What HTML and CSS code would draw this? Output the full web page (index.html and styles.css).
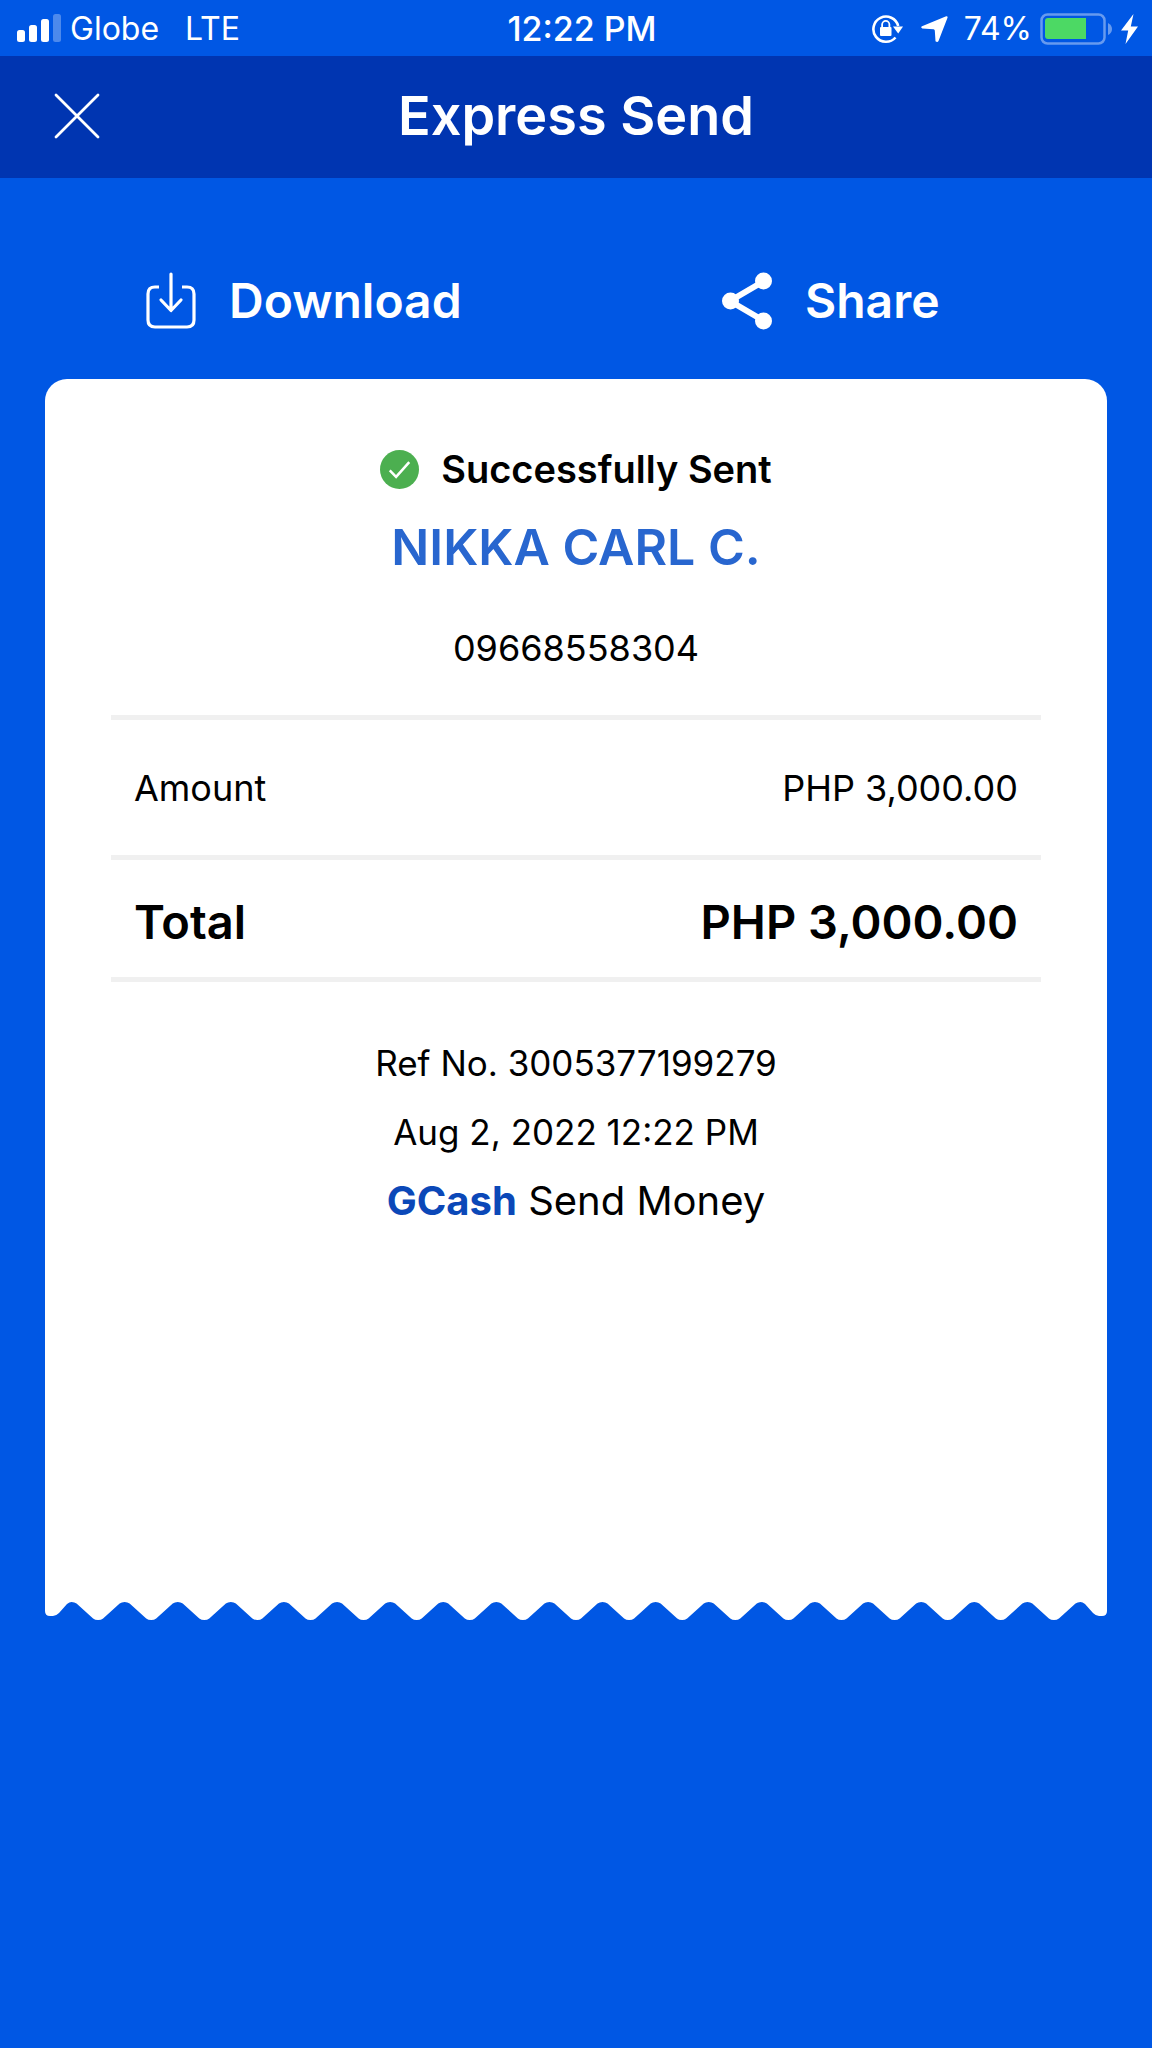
FILE: index.html
```html
<!DOCTYPE html>
<html lang="en">
<head>
<meta charset="utf-8">
<meta name="viewport" content="width=device-width, initial-scale=1">
<title>Express Send</title>
<link rel="stylesheet" href="styles.css">
</head>
<body>
<div class="status">
  <div class="status-side">
    <svg class="signal" width="46" height="30" viewBox="0 0 46 30" fill="#fff" aria-hidden="true">
      <rect x="1" y="16" width="8" height="12" rx="2.5"/>
      <rect x="13" y="11" width="8" height="17" rx="2.5"/>
      <rect x="25" y="5" width="8" height="23" rx="2.5"/>
      <rect x="37" y="0" width="8" height="28" rx="2.5" opacity=".3"/>
    </svg>
    <span class="carrier">Globe</span>
    <span>LTE</span>
  </div>
  <div class="clock">12:22 PM</div>
  <div class="status-side status-right">
    <svg width="32" height="30" viewBox="0 0 32 30" aria-hidden="true">
      <path d="M24.500 23.500A12.600 12.600 0 1 1 27.200 12" fill="none" stroke="#fff" stroke-width="2.600"/>
      <path d="M22 12.500H32L27.200 19.500Z" fill="#fff"/>
      <rect x="9" y="13" width="11.500" height="9" rx="1" fill="#fff"/>
      <path d="M11.100 13.500V10.600a3.650 3.650 0 0 1 7.300 0V13.500" fill="none" stroke="#fff" stroke-width="1.800"/>
    </svg>
    <svg class="location" width="27" height="27" viewBox="0 0 27 27" aria-hidden="true">
      <path d="M25.200.200Q27 0 26.500 1.800L17.500 25Q16.500 27 14.500 25.300L13.800 14.500Q13.600 13.500 12.600 13.300L1.300 12.500Q-.800 11.500 1 10.200Z" fill="#fff"/>
    </svg>
    <span class="percent">74%</span>
    <svg class="battery" width="73" height="32" viewBox="0 0 73 32" aria-hidden="true">
      <rect x="1.500" y="1.500" width="63" height="29" rx="6" fill="none" stroke="#fff" stroke-opacity=".4" stroke-width="2.500"/>
      <path d="M8 5H46V26H8Q5 26 5 23V8Q5 5 8 5Z" fill="#4cd964"/>
      <path d="M68 10Q72 12 72 16Q72 20 68 22Z" fill="#fff" opacity=".4"/>
    </svg>
    <svg class="bolt" width="17" height="30" viewBox="0 0 17 30" aria-hidden="true">
      <path d="M12.500 0L0 16.500H7.200L4.500 30L17 12.500H9.800Z" fill="#fff"/>
    </svg>
  </div>
</div>
<header class="header">
  <button class="close" type="button" aria-label="Close">
    <svg width="46" height="46" viewBox="0 0 46 46" aria-hidden="true">
      <path d="M2 2L44 44M44 2L2 44" stroke="#fff" stroke-width="2.800" stroke-linecap="round"/>
    </svg>
  </button>
  <h1 class="title">Express Send</h1>
</header>
<main>
  <div class="actions">
    <button class="action" type="button">
      <svg width="50" height="58" viewBox="0 0 50 58" fill="none" stroke="#fff" stroke-width="3.200" stroke-linecap="round" stroke-linejoin="round" aria-hidden="true">
        <path d="M13 15H9Q2 15 2 22V48Q2 55 9 55H41Q48 55 48 48V22Q48 15 41 15H36" stroke-linecap="butt"/>
        <path d="M25 2V38M15 28L25 38.500L35 28"/>
      </svg>
      Download
    </button>
    <button class="action" type="button">
      <svg width="50" height="58" viewBox="0 0 50 58" fill="#fff" aria-hidden="true">
        <path d="M42 9L8 29L42 49" fill="none" stroke="#fff" stroke-width="6"/>
        <circle cx="41.500" cy="9" r="8.500"/>
        <circle cx="8.500" cy="29" r="8.500"/>
        <circle cx="41.500" cy="49" r="8.500"/>
      </svg>
      Share
    </button>
  </div>
  <section class="receipt">
    <div class="card">
      <p class="success">
        <svg width="39" height="39" viewBox="0 0 40 40" aria-hidden="true">
          <circle cx="20" cy="20" r="20" fill="#4caf50"/>
          <path d="M10 21L16.500 27.500L30 12.500" fill="none" stroke="#fff" stroke-width="2.600"/>
        </svg>
        Successfully Sent
      </p>
      <h2 class="name">NIKKA CARL C.</h2>
      <p class="phone">09668558304</p>
      <table class="amounts">
        <tbody>
          <tr><th scope="row">Amount</th><td>PHP 3,000.00</td></tr>
          <tr class="total"><th scope="row">Total</th><td>PHP 3,000.00</td></tr>
        </tbody>
      </table>
      <div class="details">
        <p>Ref No. 3005377199279</p>
        <p>Aug 2, 2022 12:22 PM</p>
        <p class="brand"><b>GCash</b> Send Money</p>
      </div>
    </div>
    <svg class="tear" viewBox="0 0 1062 21" aria-hidden="true">
      <path fill="#fff" d="M0 0V11Q0 16 5 16H8Q11 16 14 13L22 4Q24.500 2 26.550 2
      q3 0 5 1.600l16.550 14.800q2 1.600 5 1.600q3 0 5-1.600l16.550-14.800q2-1.600 5-1.600
      q3 0 5 1.600l16.550 14.800q2 1.600 5 1.600q3 0 5-1.600l16.550-14.800q2-1.600 5-1.600
      q3 0 5 1.600l16.550 14.800q2 1.600 5 1.600q3 0 5-1.600l16.550-14.800q2-1.600 5-1.600
      q3 0 5 1.600l16.550 14.800q2 1.600 5 1.600q3 0 5-1.600l16.550-14.800q2-1.600 5-1.600
      q3 0 5 1.600l16.550 14.800q2 1.600 5 1.600q3 0 5-1.600l16.550-14.800q2-1.600 5-1.600
      q3 0 5 1.600l16.550 14.800q2 1.600 5 1.600q3 0 5-1.600l16.550-14.800q2-1.600 5-1.600
      q3 0 5 1.600l16.550 14.800q2 1.600 5 1.600q3 0 5-1.600l16.550-14.800q2-1.600 5-1.600
      q3 0 5 1.600l16.550 14.800q2 1.600 5 1.600q3 0 5-1.600l16.550-14.800q2-1.600 5-1.600
      q3 0 5 1.600l16.550 14.800q2 1.600 5 1.600q3 0 5-1.600l16.550-14.800q2-1.600 5-1.600
      q3 0 5 1.600l16.550 14.800q2 1.600 5 1.600q3 0 5-1.600l16.550-14.800q2-1.600 5-1.600
      q3 0 5 1.600l16.550 14.800q2 1.600 5 1.600q3 0 5-1.600l16.550-14.800q2-1.600 5-1.600
      q3 0 5 1.600l16.550 14.800q2 1.600 5 1.600q3 0 5-1.600l16.550-14.800q2-1.600 5-1.600
      q3 0 5 1.600l16.550 14.800q2 1.600 5 1.600q3 0 5-1.600l16.550-14.800q2-1.600 5-1.600
      q3 0 5 1.600l16.550 14.800q2 1.600 5 1.600q3 0 5-1.600l16.550-14.800q2-1.600 5-1.600
      q3 0 5 1.600l16.550 14.800q2 1.600 5 1.600q3 0 5-1.600l16.550-14.800q2-1.600 5-1.600
      q3 0 5 1.600l16.550 14.800q2 1.600 5 1.600q3 0 5-1.600l16.550-14.800q2-1.600 5-1.600
      q3 0 5 1.600l16.550 14.800q2 1.600 5 1.600q3 0 5-1.600l16.550-14.800q2-1.600 5-1.600
      q3 0 5 1.600l16.550 14.800q2 1.600 5 1.600q3 0 5-1.600l16.550-14.800q2-1.600 5-1.600
      q3 0 5 1.600l16.550 14.800q2 1.600 5 1.600q3 0 5-1.600l16.550-14.800q2-1.600 5-1.600
      Q1037.500 2 1040 4L1048 13Q1051 16 1054 16H1057Q1062 16 1062 11V0Z"/>
    </svg>
  </section>
</main>
</body>
</html>
```
FILE: styles.css
```css
* {
  box-sizing: border-box;
}

body {
  margin: 0;
  min-height: 100vh;
  background: #0057e4;
  color: #000;
  font-family: Inter, "Liberation Sans", sans-serif;
  font-size: 36px;
  line-height: 48px;
}

h1,
h2,
p {
  margin: 0;
}

svg {
  display: block;
  flex: none;
}

button {
  border: 0;
  padding: 0;
  background: none;
  color: inherit;
  font: inherit;
  cursor: pointer;
}

.status {
  display: grid;
  grid-template-columns: 1fr auto 1fr;
  align-items: center;
  height: 56px;
  padding: 2px 14px 0 16px;
  color: #fff;
  font-size: 32px;
}

.status-side {
  display: flex;
  align-items: center;
}

.status-right {
  justify-content: flex-end;
}

.signal {
  margin-right: 8px;
}

.carrier {
  margin-right: 26px;
}

.clock {
  padding-left: 10px;
  font-weight: 500;
  font-size: 34px;
}

.location {
  margin: 0 16px 0 18px;
}

.percent {
  margin-right: 8px;
}

.bolt {
  margin-left: 8px;
}

.header {
  display: grid;
  grid-template-columns: 1fr auto 1fr;
  align-items: center;
  height: 122px;
  padding: 0 54px 2px;
  background: #0035b1;
  color: #fff;
}

.close {
  justify-self: start;
}

.title {
  font-size: 54px;
  font-weight: 600;
  line-height: 60px;
}

.actions {
  display: grid;
  grid-template-columns: 1fr 1fr;
  height: 201px;
  padding-top: 44px;
  color: #fff;
}

.action {
  display: flex;
  align-items: center;
  gap: 33px;
  padding-left: 146px;
  font-size: 48px;
  font-weight: 600;
}

.receipt {
  margin: 0 45px;
}

.card {
  min-height: 1221px;
  padding: 66px 66px 0;
  border-radius: 22px 22px 0 0;
  background: #fff;
  text-align: center;
}

.success {
  display: flex;
  align-items: center;
  justify-content: center;
  gap: 22px;
  font-size: 38px;
  font-weight: 600;
}

.name {
  margin-top: 24px;
  color: #2866cf;
  font-size: 50px;
  font-weight: 600;
  line-height: 60px;
}

.phone {
  margin-top: 47px;
}

.amounts {
  width: 100%;
  margin-top: 43px;
  border-top: 5px solid #f0f0f0;
  border-spacing: 0;
}

.amounts th,
.amounts td {
  padding: 44px 23px 43px;
  border-bottom: 5px solid #f0f0f0;
  font-weight: 400;
  text-align: left;
}

.amounts td {
  text-align: right;
}

.amounts .total th,
.amounts .total td {
  padding: 32px 23px 25px;
  font-size: 47px;
  font-weight: 600;
  line-height: 60px;
}

.details {
  display: grid;
  gap: 21px;
  margin-top: 57px;
  font-size: 35px;
}

.brand {
  font-size: 40px;
}

.brand b {
  color: #0b48b8;
  font-weight: 700;
}

.tear {
  width: 100%;
  height: auto;
}
```
